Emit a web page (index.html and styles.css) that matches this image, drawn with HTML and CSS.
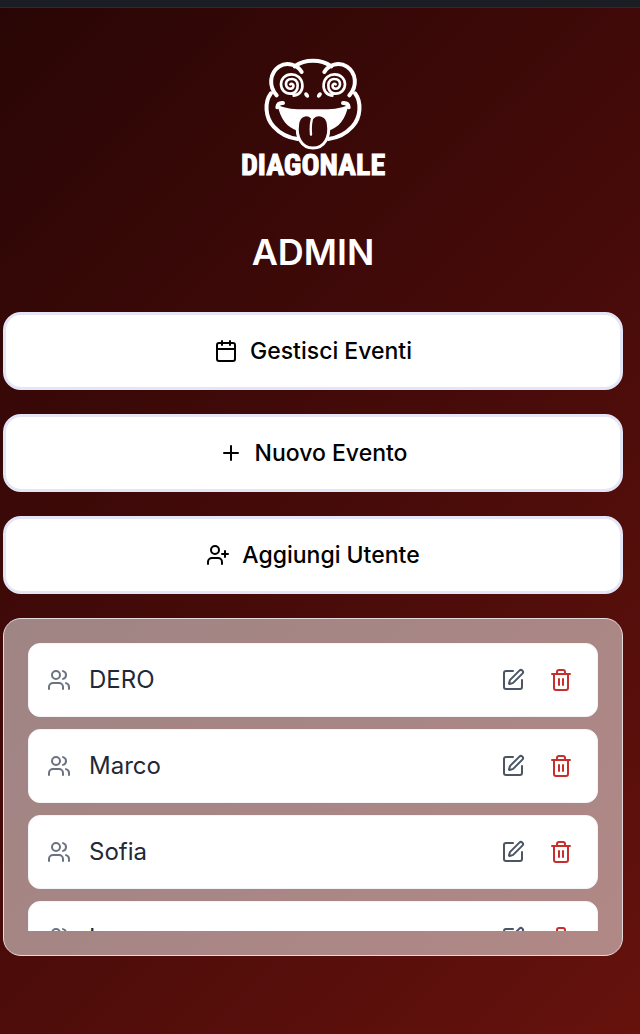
FILE: index.html
```
<!DOCTYPE html>
<html lang="it">
<head>
<meta charset="utf-8">
<meta name="viewport" content="width=device-width, initial-scale=1">
<title>Diagonale - Admin</title>
<link rel="stylesheet" href="styles.css">
</head>
<body>
<svg class="sprite" aria-hidden="true">
  <symbol id="calendar" viewBox="0 0 24 24"><path d="M8 2v4M16 2v4M3 10h18"/><rect x="3" y="4" width="18" height="18" rx="2"/></symbol>
  <symbol id="plus" viewBox="0 0 24 24"><path d="M5 12h14M12 5v14"/></symbol>
  <symbol id="user-plus" viewBox="0 0 24 24"><path d="M16 21v-2a4 4 0 0 0-4-4H6a4 4 0 0 0-4 4v2"/><circle cx="9" cy="7" r="4"/><path d="M19 8v6M22 11h-6"/></symbol>
  <symbol id="users" viewBox="0 0 24 24"><path d="M16 21v-2a4 4 0 0 0-4-4H6a4 4 0 0 0-4 4v2"/><circle cx="9" cy="7" r="4"/><path d="M22 21v-2a4 4 0 0 0-3-3.87M16 3.13a4 4 0 0 1 0 7.75"/></symbol>
  <symbol id="edit" viewBox="0 0 24 24"><path d="M12 3H5a2 2 0 0 0-2 2v14a2 2 0 0 0 2 2h14a2 2 0 0 0 2-2v-7"/><path d="M18.375 2.625a1 1 0 0 1 3 3l-9.013 9.014a2 2 0 0 1-.853.505l-2.873.84a.5.5 0 0 1-.62-.62l.84-2.873a2 2 0 0 1 .506-.852z"/></symbol>
  <symbol id="trash" viewBox="0 0 24 24"><path d="M3 6h18M19 6v14a2 2 0 0 1-2 2H7a2 2 0 0 1-2-2V6M8 6V4a2 2 0 0 1 2-2h4a2 2 0 0 1 2 2v2M10 11v6M14 11v6"/></symbol>
</svg>
<div class="topbar"></div>
<main class="page">
  <div class="brand">
    <svg class="frog" viewBox="81 24 306 279" aria-hidden="true">
      <defs>
        <g id="half">
          <path d="M200 66C188 44 156 34 132 50C104 70 100 108 125 136"/>
          <path d="M108 130C88 156 90 202 116 230C136 252 162 264 188 267"/>
          <path d="M127 172C128 162 134 158 144 159"/>
          <path class="spiral" d="M176 137C194 135 204 120 202 103C200 84 186 73 169 73C150 73 138 87 138 103C138 119 150 131 166 131C181 131 189 119 188 105C187 92 179 86 169 87C158 87 152 95 153 104C154 113 161 117 168 116C175 115 177 108 174 104C172 101 168 101 166 103"/>
          <ellipse class="solid" cx="215" cy="135" rx="6" ry="9" transform="rotate(-32 215 135)"/>
        </g>
      </defs>
      <path d="M179 49C210 27 258 27 289 49"/>
      <use href="#half"/>
      <use href="#half" transform="translate(468 0) scale(-1 1)"/>
      <path class="solid" d="M128 164C158 180 196 178 234 178C272 178 310 180 340 164C332 208 312 232 280 242L188 242C156 232 136 208 128 164Z"/>
      <path class="tongue" d="M232 203C218 188 192 192 188 222C182 262 200 294 234 294C268 294 286 262 280 222C276 192 248 188 232 203Z"/>
      <path class="crease" d="M234 198C226 216 226 232 228 254"/>
    </svg>
    <div class="wordmark">DIAGONALE</div>
  </div>
  <h1 class="title">ADMIN</h1>
  <div class="actions">
    <button class="action" type="button"><svg class="icon"><use href="#calendar"/></svg>Gestisci Eventi</button>
    <button class="action" type="button"><svg class="icon"><use href="#plus"/></svg>Nuovo Evento</button>
    <button class="action" type="button"><svg class="icon"><use href="#user-plus"/></svg>Aggiungi Utente</button>
  </div>
  <section class="panel" aria-label="Utenti">
    <ul class="users">
      <li class="user"><svg class="icon"><use href="#users"/></svg><span class="name">DERO</span><button class="tool" type="button" aria-label="Modifica DERO"><svg class="icon"><use href="#edit"/></svg></button><button class="tool danger" type="button" aria-label="Elimina DERO"><svg class="icon"><use href="#trash"/></svg></button></li>
      <li class="user"><svg class="icon"><use href="#users"/></svg><span class="name">Marco</span><button class="tool" type="button" aria-label="Modifica Marco"><svg class="icon"><use href="#edit"/></svg></button><button class="tool danger" type="button" aria-label="Elimina Marco"><svg class="icon"><use href="#trash"/></svg></button></li>
      <li class="user"><svg class="icon"><use href="#users"/></svg><span class="name">Sofia</span><button class="tool" type="button" aria-label="Modifica Sofia"><svg class="icon"><use href="#edit"/></svg></button><button class="tool danger" type="button" aria-label="Elimina Sofia"><svg class="icon"><use href="#trash"/></svg></button></li>
      <li class="user"><svg class="icon"><use href="#users"/></svg><span class="name">Luca</span><button class="tool" type="button" aria-label="Modifica Luca"><svg class="icon"><use href="#edit"/></svg></button><button class="tool danger" type="button" aria-label="Elimina Luca"><svg class="icon"><use href="#trash"/></svg></button></li>
    </ul>
  </section>
</main>
</body>
</html>
```
FILE: styles.css
```
* { box-sizing: border-box; }

body {
  margin: 0;
  min-height: 100vh;
  display: flex;
  flex-direction: column;
  font-family: Inter, "Liberation Sans", sans-serif;
  background: #3d0a08;
}

.sprite { display: none; }

.topbar {
  height: 8px;
  background: #1a1d24;
  border-bottom: 1px solid #2c2b32;
}

.page {
  flex: 1;
  padding: 50px 17px 24px 3px;
  background: linear-gradient(135deg, #290605 0%, #460b09 50%, #66120d 100%);
}

.brand {
  display: flex;
  flex-direction: column;
  align-items: center;
  color: #fff;
}

.frog {
  width: 102px;
  height: 93px;
  fill: none;
  stroke: #fff;
  stroke-width: 12;
  stroke-linecap: round;
  stroke-linejoin: round;
}

.spiral { stroke-width: 8; }
.solid { fill: #fff; stroke: none; }
.tongue { fill: #3b0908; stroke-width: 9; }
.crease { stroke-width: 7; }

.wordmark {
  font: bold 30px/28px "Liberation Sans Narrow", "Roboto Condensed", "Open Sans Condensed", sans-serif;
  -webkit-text-stroke: 1px #fff;
}

.title {
  margin: 53px 0 40px;
  font-size: 36px;
  line-height: 40px;
  font-weight: 600;
  text-align: center;
  color: #fff;
}

.actions {
  display: grid;
  gap: 24px;
}

.action {
  display: flex;
  align-items: center;
  justify-content: center;
  gap: 12px;
  padding: 18px;
  border: 3px solid #e4e6f8;
  border-radius: 18px;
  background: #fff;
  color: #000;
  font: 500 23px/36px Inter, "Liberation Sans", sans-serif;
}

.icon {
  flex: none;
  display: block;
  width: 24px;
  height: 24px;
  fill: none;
  stroke: currentColor;
  stroke-width: 2;
  stroke-linecap: round;
  stroke-linejoin: round;
}

.panel {
  margin-top: 24px;
  padding: 24px;
  border: 1px solid #e5dadb;
  border-radius: 18px;
  background: rgba(255, 255, 255, 0.5);
}

.users {
  display: flex;
  flex-direction: column;
  gap: 12px;
  max-height: 288px;
  margin: 0;
  padding: 0;
  overflow-x: hidden;
  overflow-y: auto;
  scrollbar-width: none;
  list-style: none;
}

.user {
  flex: none;
  display: flex;
  align-items: center;
  gap: 12px;
  padding: 18px;
  border: 1px solid #f3f4f6;
  border-radius: 12px;
  background: #fff;
  color: #6b7280;
}

.name {
  flex: 1;
  padding-left: 6px;
  color: #1f2937;
  font-size: 24px;
  line-height: 36px;
}

.tool {
  padding: 6px;
  border: 0;
  background: none;
  color: #4b5563;
}

.danger { color: #c5302c; }
```
